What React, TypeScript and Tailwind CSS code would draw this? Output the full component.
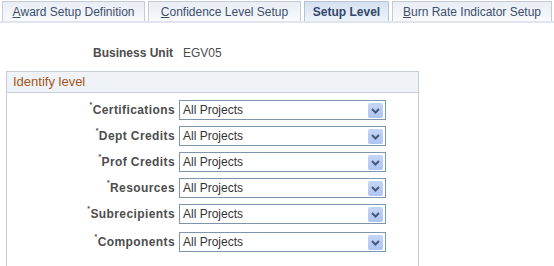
import React from 'react';

const tabs = [
  { pre: 'A', rest: 'ward Setup Definition', active: false, w: 'w-[143px]' },
  { pre: 'C', rest: 'onfidence Level Setup', active: false, w: 'w-[153px]' },
  { pre: '', rest: 'Setup Level', active: true, w: 'w-[85px]' },
  { pre: 'B', rest: 'urn Rate Indicator Setup', active: false, w: 'w-[160px]' },
];

const fields = ['Certifications', 'Dept Credits', 'Prof Credits', 'Resources', 'Subrecipients', 'Components'];

const DropButton: React.FC = () => (
  <div className="absolute right-[2px] top-[2px] w-[15px] h-[15px] rounded-[2px] bg-gradient-to-b from-[#c4d6f7] to-[#adc5f1] flex items-center justify-center">
    <svg width="9" height="6" viewBox="0 0 9 6">
      <path d="M1 1 L4.5 4.5 L8 1" stroke="#475978" strokeWidth="2" fill="none" />
    </svg>
  </div>
);

const App: React.FC = () => {
  return (
    <div className="w-[554px] h-[266px] bg-white overflow-hidden font-['Liberation_Sans',Arial,sans-serif] text-[12px]">
      <div className="flex gap-[3px] pl-[2px] pt-[1px] border-b-2 border-[#dfe5ee]">
        {tabs.map((t) => (
          <div
            key={t.rest}
            className={
              (t.active
                ? 'h-[20px] flex items-center justify-center shrink-0 whitespace-nowrap border border-b-0 border-[#b9c4d3] bg-gradient-to-b from-[#d5e1f1] to-[#eef3fa] text-[#33476a] font-bold '
                : 'h-[20px] flex items-center justify-center shrink-0 whitespace-nowrap border border-b-0 border-[#c3cbd7] bg-gradient-to-b from-[#e9eef5] to-[#f8fafc] text-[#3d4f6e] ') + t.w
            }
          >
            {t.pre && <span className="underline">{t.pre}</span>}
            {t.rest}
          </div>
        ))}
      </div>

      <div className="flex items-center mt-[23px] leading-[14px]">
        <div className="w-[173px] text-right font-bold text-[#4d4d4d]">Business Unit</div>
        <div className="ml-[10px] text-[#4d4d4d]">EGV05</div>
      </div>

      <div className="ml-[6px] mt-[11px] w-[413px] h-[200px] border border-[#c8ccd4]">
        <div className="h-[21px] bg-[#eff3f7] border-b border-[#c8ccd4] flex items-center pl-[6px] text-[13px] text-[#a65520]">
          Identify level
        </div>
        <div className="flex flex-col gap-[6px] pt-[7px]">
          {fields.map((f, i) => (
            <div key={f} className={i === 5 ? 'flex items-center mt-[2px]' : 'flex items-center'}>
              <div className="w-[168px] text-right font-bold text-[#4d4d4d] tracking-[0.4px]">
                <span className="text-[7px] align-top relative top-[-1px]">*</span>
                {f}
              </div>
              <div className="relative ml-[4px] w-[207px] h-[20px] border border-[#7d96b0] bg-white flex items-center pl-[3px] text-[#333]">
                All Projects
                <DropButton />
              </div>
            </div>
          ))}
        </div>
      </div>
    </div>
  );
};

export default App;
